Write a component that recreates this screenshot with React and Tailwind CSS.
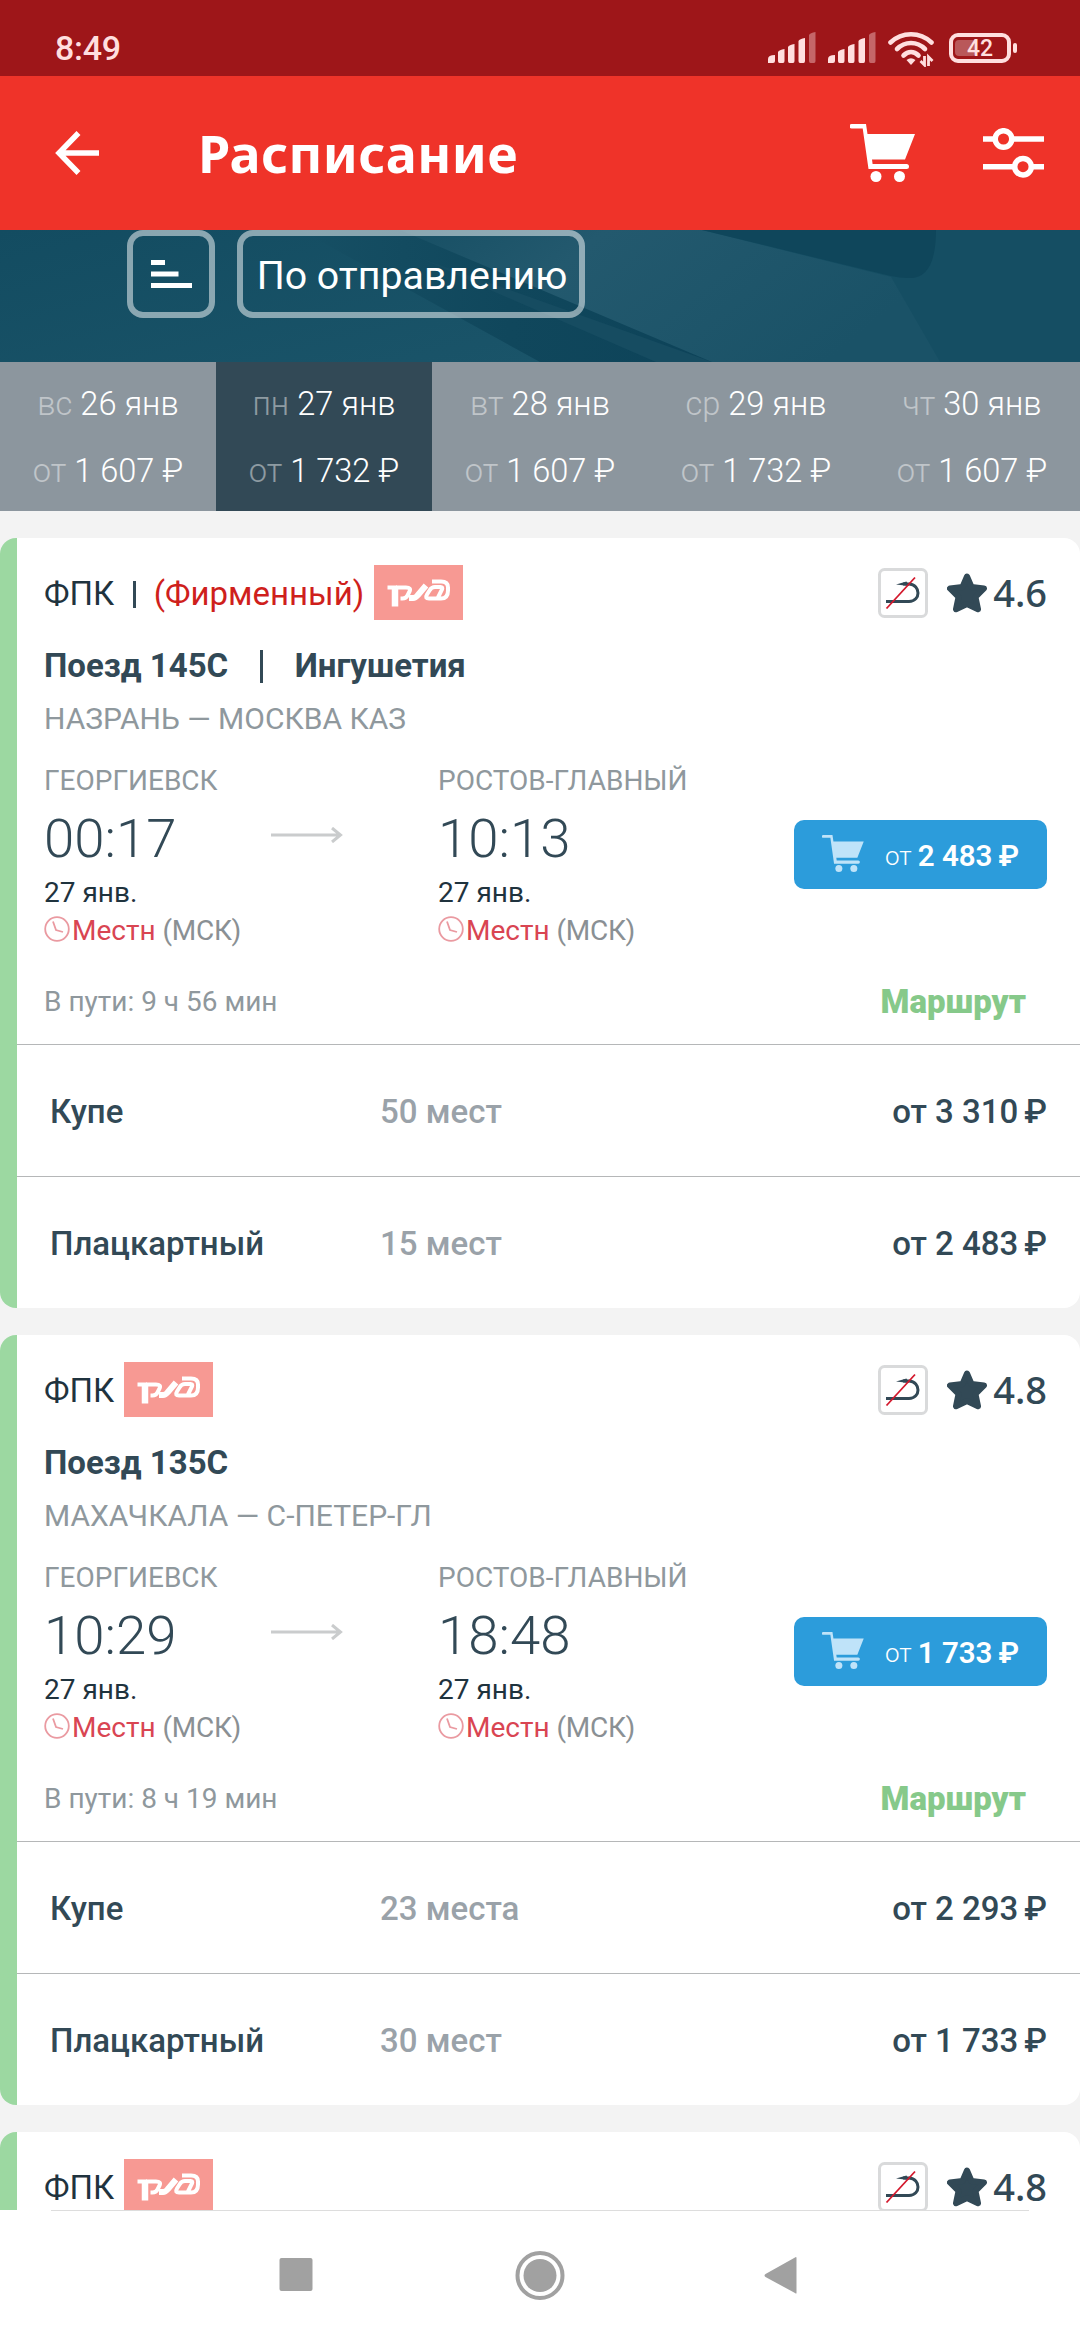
import React from "react";

const days = [
  { day: "вс", date: "26 янв", price: "1 607 ₽" },
  { day: "пн", date: "27 янв", price: "1 732 ₽", active: true },
  { day: "вт", date: "28 янв", price: "1 607 ₽" },
  { day: "ср", date: "29 янв", price: "1 732 ₽" },
  { day: "чт", date: "30 янв", price: "1 607 ₽" },
];

const trains = [
  {
    id: 1,
    branded: true,
    number: "Поезд 145С",
    name: "Ингушетия",
    rating: "4.6",
    route: "НАЗРАНЬ — МОСКВА КАЗ",
    departure: "00:17",
    arrival: "10:13",
    duration: "9 ч 56 мин",
    minPrice: "2 483",
    seats: [
      { type: "Купе", count: "50 мест", price: "3 310" },
      { type: "Плацкартный", count: "15 мест", price: "2 483" },
    ],
  },
  {
    id: 2,
    number: "Поезд 135С",
    rating: "4.8",
    route: "МАХАЧКАЛА — С-ПЕТЕР-ГЛ",
    departure: "10:29",
    arrival: "18:48",
    duration: "8 ч 19 мин",
    minPrice: "1 733",
    seats: [
      { type: "Купе", count: "23 места", price: "2 293" },
      { type: "Плацкартный", count: "30 мест", price: "1 733" },
    ],
  },
  { id: 3, rating: "4.8", seats: [] },
];

function Signal() {
  return (
    <svg width="48" height="31" viewBox="0 0 48 31" fill="#ffdfdf">
      <path d="M0 31v-4q0-4 7-4v6q0 2-2 2z" />
      <path d="M11.500 31q-1.500 0-1.500-2v-9q1-2 6.500-3v12q0 2-1.500 2z" />
      <path d="M21.500 31q-1.500 0-1.500-2V15q1-2 6.500-3v17q0 2-1.500 2z" />
      <path d="M32 31q-1.500 0-1.500-2V9q1-2 6.500-3v23q0 2-1.500 2z" />
      <path d="M42.500 31q-1.500 0-1.500-2V3q1-2 6.500-3v29q0 2-1.500 2z" opacity=".4" />
    </svg>
  );
}

function Wifi() {
  return (
    <svg width="47" height="36" viewBox="0 0 47 36" fill="none" stroke="#ffdfdf">
      <g strokeWidth="4.600" strokeLinecap="round">
        <path d="M2.500 11.500C14 .5 32 .5 43.500 11.500" />
        <path d="M9 18C17 10 29 10 37 18" />
        <path d="M15.500 24.500C20 20 26 20 30.500 24.500" />
      </g>
      <path d="M18.500 29q4.500-3.500 9 0l-4.500 5z" fill="#ffdfdf" stroke="none" />
      <path d="M36.500 25v9l-4-4M40.500 35v-9l4 4" strokeWidth="2.800" />
    </svg>
  );
}

function Cart({ className }) {
  return (
    <svg viewBox="0 0 65 58" className={className} fill="currentColor">
      <path d="M1.500 0H16l1.500 10H65L55 35.500H22l.6 4.500H56.500a2.500 2.500 0 0 1 0 5H18.500L12.700 4.500H1.500a2.200 2.200 0 0 1 0-4.500z" />
      <circle cx="26" cy="52.500" r="5.500" />
      <circle cx="49.500" cy="52.500" r="5.500" />
    </svg>
  );
}

function RzdLogo() {
  return (
    <svg width="89" height="55" viewBox="0 0 89 55" className="bg-[#f79993]">
      <g fill="none" stroke="#fff" strokeWidth="4">
        <path d="M13.500 22.500H23" />
        <path d="M21 21v20.500" strokeWidth="6.500" />
        <path d="M22 22.500h10q5.500 0 3.500 4l-2 4q-1.500 3-5 3h-2" />
        <path d="M35 33h4q2.500 0 4.500-2.500l8.500-10" strokeWidth="6" />
        <path d="M58 16.500h9q7 0 7 6v3q0 8-7 8H55q-4.500 0-2-4l2.500-4q2-3.500 5.500-3.500h5.500q2.500 0 1.500 2.500l-4 8" />
      </g>
    </svg>
  );
}

function NoReturn() {
  return (
    <svg width="50" height="50" viewBox="0 0 50 50" fill="none">
      <rect x="1.500" y="1.500" width="47" height="47" rx="5" stroke="#d9dadb" strokeWidth="3" />
      <path d="M8 33.500h23c12 0 12-17 0-17.500h-6" stroke="#324956" strokeWidth="3" />
      <path d="M18 16.500l10.500-3 2.500 4.500z" fill="#324956" />
      <path d="M8.500 40.500L37 9.500" stroke="#d3182c" strokeWidth="1.800" />
    </svg>
  );
}

function Star() {
  return (
    <svg width="40" height="40" viewBox="0 0 40 40" fill="#324956" stroke="#324956" strokeWidth="6" strokeLinejoin="round">
      <path d="M20 3.500l4.500 10.500 12.500 1.500L28.500 24l2.500 12.200L20 31 9 36.200 11.500 24 3 15.500 15.500 14z" />
    </svg>
  );
}

function Point({ station, time, className }) {
  return (
    <div className={className}>
      <div className="text-[28px] leading-9 text-[#8f989d] whitespace-nowrap">{station}</div>
      <div className="mt-[7px] text-[54.5px] leading-[64px] font-light text-[#324956]">{time}</div>
      <div className="mt-[5px] text-[28px] leading-9 text-[#1f333e]">27 янв.</div>
      <div className="mt-0.5 flex items-center text-[28px] leading-9 whitespace-nowrap">
        <svg width="26" height="26" viewBox="0 0 26 26" fill="none" stroke="#ea9aa1" strokeWidth="1.800" className="mr-0.5 -mt-1">
          <circle cx="13" cy="13" r="11.800" />
          <path d="M9 5.500l3 8.500 7 2" />
        </svg>
        <span className="text-[#d94552]">Местн</span>
        <span className="ml-[7px] tracking-[-0.3px] text-[#8a9094]">(МСК)</span>
      </div>
    </div>
  );
}

function TrainCard({ train }) {
  return (
    <article className="shrink-0 h-[770px] rounded-2xl bg-white overflow-hidden border-l-[17px] border-[#9cd8a1]">
      <div className="pt-[27px] pl-[27px] pr-[33px]">
        <div className="flex items-center h-[55px] text-[33px]">
          <span className="pt-0.5 text-[#1f333e]">ФПК</span>
          {train.branded && (
            <>
              <span className="ml-[19px] mt-1 w-[2.5px] h-[27px] bg-[#324956]" />
              <span className="pt-0.5 ml-[18px] text-[#cf1f1c]">(Фирменный)</span>
            </>
          )}
          <span className="ml-2.5">
            <RzdLogo />
          </span>
          <div className="ml-auto flex items-center">
            <NoReturn />
            <span className="ml-[19px]">
              <Star />
            </span>
            <span className="-mt-0.5 ml-1.5 font-['Noto_Sans'] font-medium text-[38px] leading-none text-[#324956]">
              {train.rating}
            </span>
          </div>
        </div>
        {train.number && (
          <>
            <div className="mt-[22px] flex items-center h-12 text-[33px] font-bold text-[#324956]">
              {train.number}
              {train.name && (
                <>
                  <span className="ml-8 mr-[32px] w-[2.5px] h-[33px] bg-[#324956]" />
                  {train.name}
                </>
              )}
            </div>
            <div className="mt-[11px] text-[30px] leading-9 text-[#8f989d]">{train.route}</div>
            <div className="mt-[26px] flex items-start">
              <Point station="ГЕОРГИЕВСК" time={train.departure} className="w-[227px]" />
              <svg width="72" height="16" viewBox="0 0 72 16" fill="none" stroke="#cacccd" strokeWidth="3" className="mt-[64px]">
                <path d="M0 8h69M61 1l8.500 7-8.500 7" />
              </svg>
              <Point station="РОСТОВ-ГЛАВНЫЙ" time={train.arrival} className="ml-[95px] w-[250px]" />
              <button className="ml-auto mt-[57px] flex items-center w-[253px] h-[69px] rounded-[10px] bg-[#2c9cdb] pl-7 pr-[28px] text-white whitespace-nowrap">
                <Cart className="-mt-0.5 w-[42px] h-[37px] text-[#bfe3f9]" />
                <span className="ml-auto mr-1.5 pt-[3px] text-[26px] font-light">от</span>
                <span className="pt-[3px] text-[29.500px] font-semibold">{train.minPrice}</span>
                <span className="ml-1.5 pt-[3px] text-[29.500px] font-semibold">₽</span>
              </button>
            </div>
            <div className="mt-[35px] mb-[24px] flex items-center justify-between h-9 pr-[21px]">
              <span className="text-[28px] text-[#8f989d]">В пути: {train.duration}</span>
              <span className="text-[33px] font-black text-[#86c98a]">Маршрут</span>
            </div>
          </>
        )}
      </div>
      {train.seats.map((seat) => (
        <div
          key={seat.type}
          className="flex items-center h-[132px] border-t border-[#b5b7b8] pt-[3px] pl-[33px] pr-[33px] text-[33px] font-medium text-[#324956]"
        >
          <span className="w-[330px]">{seat.type}</span>
          <span className="text-[#9aa2a9]">{seat.count}</span>
          <span className="ml-auto">от {seat.price}</span>
          <span className="ml-1.5">₽</span>
        </div>
      ))}
    </article>
  );
}

export default function App() {
  return (
    <div className="w-[1080px] h-[2340px] flex flex-col overflow-hidden bg-[#f3f3f3] font-['Roboto',sans-serif]">
      <div className="flex items-center h-[76px] pt-[19px] pl-[55px] pr-[63px] bg-[#9e1619] text-[#ffdfdf]">
        <span className="text-[34px] leading-none font-medium tracking-[-0.3px]">8:49</span>
        <div className="ml-auto flex items-center">
          <Signal />
          <span className="ml-3">
            <Signal />
          </span>
          <span className="ml-3 mt-0.5">
            <Wifi />
          </span>
          <span className="ml-3.5 relative flex items-center justify-center w-[62px] h-[30px] rounded-[9px] border-4 border-[#ffdfdf]">
            <span className="absolute left-0.5 top-[3px] w-[21px] h-4 rounded-sm bg-[#b9585a]" />
            <span className="relative pt-0.5 text-[23px] leading-none font-medium">42</span>
          </span>
          <span className="ml-0.5 w-1 h-2.5 rounded-sm bg-[#ffdfdf]" />
        </div>
      </div>

      <header className="flex items-center h-[154px] pl-[55px] pr-9 bg-[#ef3329] text-white">
        <svg width="44" height="44" viewBox="0 0 44 44" fill="none" stroke="#fff" strokeWidth="5.500">
          <path d="M44 22H4M23.500 2L4 22l19.500 20" />
        </svg>
        <h1 className="ml-[99px] font-['Noto_Sans'] font-bold text-[52px] leading-none tracking-[0.4px]">Расписание</h1>
        <Cart className="ml-auto w-[65px] h-[58px]" />
        <svg width="61" height="50" viewBox="0 0 61 50" fill="none" stroke="#fff" strokeWidth="5.500" className="ml-[68px]">
          <path d="M0 11h12M29 11h32M0 38.700h31M48 38.700h13" />
          <circle cx="20.500" cy="11" r="8.300" />
          <circle cx="40" cy="38.700" r="8.300" />
        </svg>
      </header>

      <div className="relative h-[132px] bg-[#154e63]">
        <svg width="1080" height="132" viewBox="0 0 1080 132" className="absolute inset-0">
          <defs>
            <linearGradient id="deck" x1="0" y1="0" x2="1" y2="1">
              <stop offset="0" stopColor="#134c61" />
              <stop offset="1" stopColor="#1a5469" />
            </linearGradient>
            <linearGradient id="side" x1="0" y1="0" x2="1" y2="0">
              <stop offset="0" stopColor="#164f64" />
              <stop offset=".5" stopColor="#10475c" />
              <stop offset="1" stopColor="#0d4359" />
            </linearGradient>
            <linearGradient id="roof" x1="0" y1="0" x2="1" y2="0.3">
              <stop offset="0" stopColor="#174f64" />
              <stop offset=".35" stopColor="#23596e" />
              <stop offset="1" stopColor="#1a5267" />
            </linearGradient>
          </defs>
          <rect width="540" height="132" fill="url(#deck)" />
          <path d="M300 0h130l290 132H540z" fill="url(#side)" />
          <path d="M420 28l292 104h-56L490 60z" fill="#164c61" />
          <path d="M400 0h302l189 47 49 85H712z" fill="url(#roof)" />
          <path d="M702 0h234q0 50-28 48-8 0-17-2z" fill="#0f465b" />
        </svg>
        <div className="relative flex pl-[127px] gap-[22px]">
          <button className="flex items-center justify-center w-[88px] h-[88px] rounded-2xl border-[6px] border-white/50">
            <svg width="41" height="28" viewBox="0 0 41 28" fill="#fff">
              <path d="M0 0h14v5H0zM0 11.500h27.500v5H0zM0 23h41v5H0z" />
            </svg>
          </button>
          <button className="w-[348px] h-[88px] pt-[4px] pl-0.5 rounded-2xl border-[6px] border-white/50 text-[39.3px] leading-[72px] text-white whitespace-nowrap">
            По отправлению
          </button>
        </div>
      </div>

      <nav className="grid grid-cols-5 h-[149px] text-[32.600px] font-light text-white">
        {days.map((d) => (
          <div
            key={d.date}
            className={
              d.active
                ? "flex flex-col items-center pt-[18px] bg-[#324956]"
                : "flex flex-col items-center pt-[18px] bg-[#8c969e]"
            }
          >
            <div className="leading-[48px]">
              <span className="opacity-45">{d.day}</span> {d.date}
            </div>
            <div className="mt-[19px] leading-[48px]">
              <span className="opacity-45">от</span> {d.price}
            </div>
          </div>
        ))}
      </nav>

      <main className="h-[1699px] shrink-0 flex flex-col gap-[27px] pt-[27px] overflow-hidden">
        {trains.map((train) => (
          <TrainCard key={train.id} train={train} />
        ))}
      </main>

      <footer className="h-[130px] bg-white px-[51px]">
        <div className="h-px bg-[#dddddd]" />
        <svg width="978" height="129" viewBox="51 2211 978 129" fill="#a1a1a1">
          <rect x="279.500" y="2258" width="33" height="33" rx="2" />
          <circle cx="540" cy="2275.500" r="22.500" fill="none" stroke="#a1a1a1" strokeWidth="4" />
          <circle cx="540" cy="2275.500" r="16.500" />
          <path d="M796.500 2258v35q0 1-1.500 0l-29.500-16q-2-1.500 0-3L795 2257.500q1.500-1 1.500.5z" />
        </svg>
      </footer>
    </div>
  );
}
